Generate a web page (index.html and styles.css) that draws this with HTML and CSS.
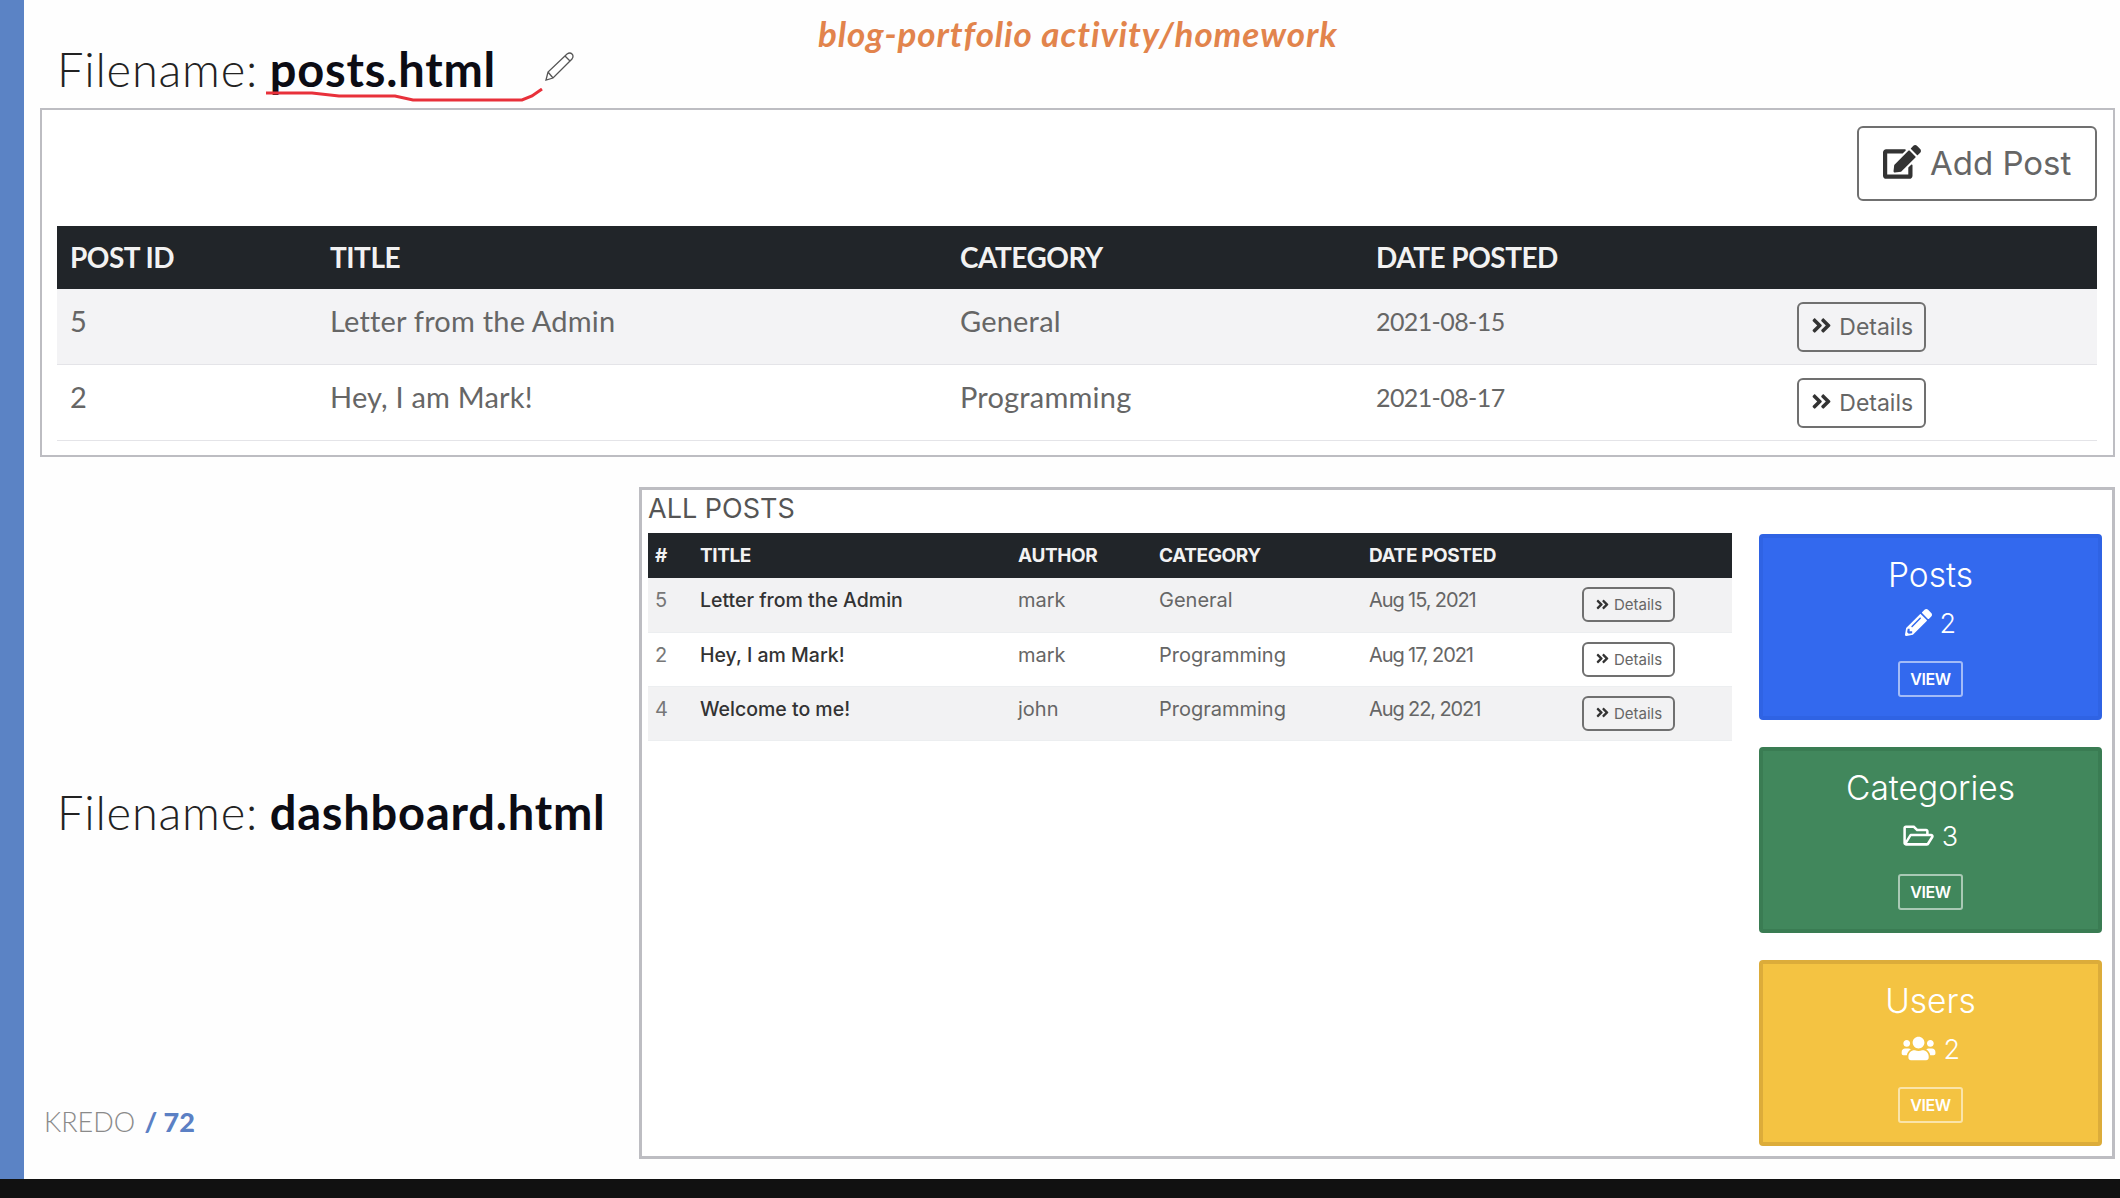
FILE: index.html
```html
<!DOCTYPE html>
<html lang="en">
<head>
  <meta charset="UTF-8">
  <meta name="viewport" content="width=device-width, initial-scale=1.0">
  <title>blog-portfolio activity/homework</title>
  <link rel="stylesheet" href="styles.css">
</head>
<body>
  <svg class="icon-defs" aria-hidden="true">
    <symbol id="i-edit" viewBox="0 0 576 512"><path d="M402.6 83.2l90.2 90.2c3.8 3.8 3.8 10 0 13.8L274.4 405.6l-92.8 10.3c-12.4 1.4-22.9-9.1-21.5-21.5l10.3-92.8L388.8 83.2c3.8-3.8 10-3.8 13.8 0zm162-22.9l-48.8-48.8c-15.2-15.2-39.9-15.2-55.2 0l-35.4 35.4c-3.8 3.8-3.8 10 0 13.8l90.2 90.2c3.8 3.8 10 3.8 13.8 0l35.4-35.4c15.2-15.3 15.2-40 0-55.2zM384 346.2V448H64V128h229.8c3.2 0 6.2-1.3 8.5-3.5l40-40c7.6-7.6 2.2-20.5-8.5-20.5H48C21.5 64 0 85.5 0 112v352c0 26.5 21.5 48 48 48h352c26.5 0 48-21.5 48-48V306.2c0-10.7-12.9-16-20.5-8.5l-40 40c-2.2 2.3-3.5 5.3-3.5 8.5z"/></symbol>
    <symbol id="i-chevrons" viewBox="0 0 448 512"><path d="M224.3 273l-136 136c-9.4 9.4-24.6 9.4-33.9 0l-22.6-22.6c-9.4-9.4-9.4-24.6 0-33.9l96.4-96.4-96.4-96.4c-9.4-9.4-9.4-24.6 0-33.9L54.3 103c9.4-9.4 24.6-9.4 33.9 0l136 136c9.5 9.4 9.5 24.6.1 34zm192-34l-136-136c-9.4-9.4-24.6-9.4-33.9 0l-22.6 22.6c-9.4 9.4-9.4 24.6 0 33.9l96.4 96.4-96.4 96.4c-9.4 9.4-9.4 24.6 0 33.9l22.6 22.6c9.4 9.4 24.6 9.4 33.9 0l136-136c9.4-9.2 9.4-24.4 0-33.8z"/></symbol>
    <symbol id="i-pencil" viewBox="0 0 512 512"><path d="M497.9 142.1l-46.1 46.1c-4.7 4.7-12.3 4.7-17 0l-111-111c-4.7-4.7-4.7-12.3 0-17l46.1-46.1c18.7-18.7 49.1-18.7 67.9 0l60.1 60.1c18.8 18.7 18.8 49.1 0 67.9zM284.2 99.8L21.6 362.4.4 483.9c-2.9 16.4 11.4 30.6 27.8 27.8l121.5-21.3 262.6-262.6c4.7-4.7 4.7-12.3 0-17l-111-111c-4.8-4.7-12.4-4.7-17.1 0zM124.1 339.9c-5.5-5.5-5.5-14.3 0-19.8l154-154c5.5-5.5 14.3-5.5 19.8 0s5.5 14.3 0 19.8l-154 154c-5.5 5.5-14.3 5.5-19.8 0zM88 424h48v36.3l-64.5 11.3-31.1-31.1L51.7 376H88v48z"/></symbol>
    <symbol id="i-folder" viewBox="0 0 576 512"><path d="M527.9 224H480v-48c0-26.5-21.5-48-48-48H272l-64-64H48C21.5 64 0 85.5 0 112v288c0 26.5 21.5 48 48 48h400c16.5 0 31.9-8.5 40.7-22.6l79.9-128c20-31.9-3-73.4-40.7-73.4zM48 118c0-3.3 2.7-6 6-6h134.1l64 64H426c3.3 0 6 2.7 6 6v42H152c-16.8 0-32.4 8.8-41.1 23.2L48 351.4zm400 282H72l77.2-128H528z"/></symbol>
    <symbol id="i-users" viewBox="0 0 640 512"><path d="M96 224c35.3 0 64-28.7 64-64s-28.7-64-64-64-64 28.7-64 64 28.7 64 64 64zm448 0c35.3 0 64-28.7 64-64s-28.7-64-64-64-64 28.7-64 64 28.7 64 64 64zm32 32h-64c-17.6 0-33.5 7.1-45.1 18.6 40.3 22.1 68.9 62 75.1 109.4h66c17.7 0 32-14.3 32-32v-32c0-35.3-28.7-64-64-64zm-256 0c61.9 0 112-50.1 112-112S381.9 32 320 32 208 82.1 208 144s50.1 112 112 112zm76.8 32h-8.3c-20.8 10-43.9 16-68.5 16s-47.6-6-68.5-16h-8.3C179.6 288 128 339.6 128 403.2V432c0 26.5 21.5 48 48 48h288c26.5 0 48-21.5 48-48v-28.8c0-63.6-51.6-115.2-115.2-115.2zm-223.7-13.4C161.5 263.1 145.6 256 128 256H64c-35.3 0-64 28.7-64 64v32c0 17.7 14.3 32 32 32h65.9c6.3-47.4 34.9-87.3 75.2-109.4z"/></symbol>
  </svg>

  <div class="slide">
    <div class="rail"></div>
    <div class="content">
      <header class="slide-head">
        <h1 class="filename">Filename: <b>posts.html</b></h1>
        <p class="activity">blog-portfolio activity/homework</p>
        <!-- pen annotation drawn over the slide -->
        <svg class="scribble" viewBox="0 0 280 14" aria-hidden="true">
          <path d="M0 5 L46 5 L73 8 L129 8 L147 12 L256 12 L266 8 L276 1"/>
        </svg>
        <svg class="pen-cursor" viewBox="0 0 29 29" aria-hidden="true">
          <path d="M1 28 L3 20 L22 2 Q25 0 27 2 Q29 4 27 7 L8 26 Z M3 20 L8 26 M20 4 L25 9"/>
        </svg>
      </header>

      <section class="panel panel-posts">
        <div class="toolbar">
          <button class="btn btn-add"><svg class="icon"><use href="#i-edit"/></svg> Add Post</button>
        </div>
        <table class="posts-table">
          <colgroup>
            <col class="pc-id"><col class="pc-title"><col class="pc-cat"><col class="pc-date"><col class="pc-act">
          </colgroup>
          <thead>
            <tr><th>POST ID</th><th>TITLE</th><th>CATEGORY</th><th>DATE POSTED</th><th></th></tr>
          </thead>
          <tbody>
            <tr>
              <td>5</td><td>Letter from the Admin</td><td>General</td><td>2021-08-15</td>
              <td><button class="btn btn-details"><svg class="icon"><use href="#i-chevrons"/></svg> Details</button></td>
            </tr>
            <tr>
              <td>2</td><td>Hey, I am Mark!</td><td>Programming</td><td>2021-08-17</td>
              <td><button class="btn btn-details"><svg class="icon"><use href="#i-chevrons"/></svg> Details</button></td>
            </tr>
          </tbody>
        </table>
      </section>

      <div class="lower">
        <div class="lower-left">
          <h1 class="filename filename-dash">Filename: <b>dashboard.html</b></h1>
          <p class="page-no">KREDO <span>/ 72</span></p>
        </div>

        <section class="panel panel-dash">
          <div class="dash-main">
            <h2>ALL POSTS</h2>
            <table class="dash-table">
              <colgroup>
                <col class="dc-id"><col class="dc-title"><col class="dc-author"><col class="dc-cat"><col class="dc-date"><col class="dc-act">
              </colgroup>
              <thead>
                <tr><th>#</th><th>TITLE</th><th>AUTHOR</th><th>CATEGORY</th><th>DATE POSTED</th><th></th></tr>
              </thead>
              <tbody>
                <tr>
                  <td>5</td><td class="post-title">Letter from the Admin</td><td>mark</td><td>General</td><td>Aug 15, 2021</td>
                  <td><button class="btn btn-small"><svg class="icon"><use href="#i-chevrons"/></svg> Details</button></td>
                </tr>
                <tr>
                  <td>2</td><td class="post-title">Hey, I am Mark!</td><td>mark</td><td>Programming</td><td>Aug 17, 2021</td>
                  <td><button class="btn btn-small"><svg class="icon"><use href="#i-chevrons"/></svg> Details</button></td>
                </tr>
                <tr>
                  <td>4</td><td class="post-title">Welcome to me!</td><td>john</td><td>Programming</td><td>Aug 22, 2021</td>
                  <td><button class="btn btn-small"><svg class="icon"><use href="#i-chevrons"/></svg> Details</button></td>
                </tr>
              </tbody>
            </table>
          </div>

          <aside class="cards">
            <div class="card card-blue">
              <h3>Posts</h3>
              <p class="count"><svg class="icon"><use href="#i-pencil"/></svg> 2</p>
              <a class="view-btn">VIEW</a>
            </div>
            <div class="card card-green">
              <h3>Categories</h3>
              <p class="count"><svg class="icon icon-wide"><use href="#i-folder"/></svg> 3</p>
              <a class="view-btn">VIEW</a>
            </div>
            <div class="card card-yellow">
              <h3>Users</h3>
              <p class="count"><svg class="icon icon-wider"><use href="#i-users"/></svg> 2</p>
              <a class="view-btn">VIEW</a>
            </div>
          </aside>
        </section>
      </div>
    </div>
  </div>
  <div class="video-bar"></div>
</body>
</html>
```

FILE: styles.css
```css
html, body {
  margin: 0;
  padding: 0;
}

body {
  width: 2120px;
  height: 1198px;
  overflow: hidden;
  background-color: #111;
  font-family: Inter, "Liberation Sans", sans-serif;
  color: #555;
}

.icon-defs {
  display: none;
}

.icon {
  width: 1em;
  height: 1em;
  fill: currentColor;
  vertical-align: -0.12em;
}

.icon-wide {
  width: 1.15em;
}

.icon-wider {
  width: 1.3em;
}

.slide {
  display: flex;
  height: 1179px;
  background-color: #fefefe;
}

.rail {
  width: 24px;
  flex-shrink: 0;
  background-color: #5b83c5;
}

.content {
  flex: 1;
  display: flex;
  flex-direction: column;
  padding: 0 5px 20px 16px;
  min-width: 0;
}

/* top of the slide */
.slide-head {
  position: relative;
  height: 108px;
  display: grid;
  grid-template-columns: 761px auto;
  padding-left: 17px;
}

.filename {
  margin: 39px 0 0;
  font-family: Lato, sans-serif;
  font-size: 47px;
  font-weight: 300;
  line-height: 60px;
  letter-spacing: 0.8px;
  word-spacing: -2px;
  color: #222;
}

.filename b {
  font-weight: 700;
  color: #0c0c14;
}

.activity {
  margin: 13px 0 0;
  font-family: Lato, sans-serif;
  font-size: 35px;
  font-weight: 700;
  font-style: italic;
  line-height: 40px;
  letter-spacing: 0.9px;
  color: #e2844c;
}

.scribble {
  position: absolute;
  left: 226px;
  top: 88px;
  width: 280px;
  height: 14px;
  fill: none;
  stroke: #e8303a;
  stroke-width: 3;
}

.pen-cursor {
  position: absolute;
  left: 505px;
  top: 52px;
  width: 29px;
  height: 29px;
  fill: #fff;
  stroke: #555;
  stroke-width: 1.3;
}

/* panels */
.panel {
  background-color: #fff;
  border: 2px solid #bdbdc2;
  box-sizing: border-box;
}

.panel-posts {
  height: 349px;
  padding: 16px 16px 0 15px;
}

.toolbar {
  display: flex;
  justify-content: flex-end;
  margin-bottom: 25px;
}

.btn {
  background: transparent;
  border: 2px solid #707070;
  border-radius: 6px;
  font-family: Inter, sans-serif;
  color: #666;
  padding: 0;
  white-space: nowrap;
}

.btn .icon {
  color: #333;
}

.btn-add {
  width: 240px;
  height: 75px;
  padding-bottom: 2px;
  font-size: 33px;
}

.btn-add .icon {
  width: 1.15em;
  height: 1.15em;
  vertical-align: -0.18em;
}

.btn-details {
  width: 129px;
  height: 50px;
  font-size: 23px;
}

.btn-small {
  width: 93px;
  height: 35px;
  font-size: 15px;
}

table {
  width: 100%;
  border-collapse: collapse;
  table-layout: fixed;
}

th {
  background-color: #212529;
  color: #f2f2f2;
  text-align: left;
  font-weight: 700;
}

/* posts.html table */
.pc-id { width: 260px; }
.pc-title { width: 630px; }
.pc-cat { width: 416px; }
.pc-date { width: 428px; }

.posts-table th {
  height: 63px;
  padding: 0 0 2px 13px;
  box-sizing: border-box;
  font-family: Lato, sans-serif;
  font-size: 28px;
  letter-spacing: -0.5px;
}

.posts-table td {
  height: 75px;
  padding: 0 0 0 13px;
  font-family: Lato, sans-serif;
  font-size: 29px;
  letter-spacing: 0.2px;
  color: #666;
  border-bottom: 1px solid #e4e4e8;
}

.posts-table td:first-child,
.posts-table td:nth-child(2),
.posts-table td:nth-child(3),
.posts-table td:nth-child(4) {
  padding-bottom: 12px;
  box-sizing: border-box;
}

.posts-table td:nth-child(4) {
  font-size: 25px;
  letter-spacing: -0.6px;
}

.posts-table td:last-child {
  padding-left: 6px;
}

.posts-table tbody tr:nth-child(odd) {
  background-color: #f3f3f5;
}

/* dashboard.html */
.lower {
  flex: 1;
  display: flex;
  margin-top: 30px;
  min-height: 0;
}

.lower-left {
  width: 599px;
  flex-shrink: 0;
  display: flex;
  flex-direction: column;
}

.filename-dash {
  margin: 295px 0 0 17px;
}

.page-no {
  margin: auto 0 22px 4px;
  font-family: Lato, sans-serif;
  font-size: 27px;
  font-weight: 300;
  line-height: 30px;
  color: #8a8a8a;
}

.page-no span {
  font-weight: 900;
  color: #5b80c4;
  margin-left: 2px;
}

.panel-dash {
  flex: 1;
  display: flex;
  gap: 27px;
  border-width: 3px;
  padding: 0 10px 0 6px;
}

.dash-main {
  flex: 1;
  min-width: 0;
}

.dash-main h2 {
  margin: 0;
  height: 43px;
  font-size: 27px;
  font-weight: 400;
  line-height: 37px;
  color: #555;
}

.dc-id { width: 45px; }
.dc-title { width: 318px; }
.dc-author { width: 141px; }
.dc-cat { width: 210px; }
.dc-date { width: 215px; }

.dash-table th {
  height: 45px;
  padding: 0 0 0 7px;
  font-size: 19px;
  letter-spacing: -0.4px;
}

.dash-table td {
  height: 54px;
  box-sizing: border-box;
  padding: 10px 0 0 7px;
  vertical-align: top;
  font-size: 20px;
  color: #666;
  border-bottom: 1px solid #eceef0;
}

.dash-table td:first-child {
  color: #777;
}

.dash-table td:nth-child(5) {
  letter-spacing: -1.1px;
}

.dash-table .post-title {
  color: #333;
  font-weight: 500;
  font-size: 19.5px;
}

.dash-table td:last-child {
  padding: 9px 0 0 5px;
}

.dash-table tbody tr:nth-child(odd) {
  background-color: #f2f2f3;
}

/* side cards */
.cards {
  width: 343px;
  flex-shrink: 0;
  display: flex;
  flex-direction: column;
  gap: 27px;
  margin-top: 44px;
}

.card {
  box-sizing: border-box;
  height: 186px;
  border-radius: 4px;
  border: 4px solid transparent;
  display: flex;
  flex-direction: column;
  align-items: center;
  color: #fff;
}

.card h3 {
  margin: 17px 0 0;
  font-size: 33.5px;
  font-weight: 300;
  line-height: 40px;
}

.count {
  margin: 12px 0 0;
  font-size: 27px;
  font-weight: 300;
  line-height: 34px;
}

.view-btn {
  margin-top: 20px;
  box-sizing: border-box;
  width: 65px;
  height: 36px;
  border: 2px solid rgba(255, 255, 255, 0.55);
  border-radius: 3px;
  font-size: 16px;
  font-weight: 600;
  line-height: 32px;
  text-align: center;
  letter-spacing: -0.4px;
}

.card-blue {
  background-color: #3369ee;
  border-color: #2f63e4;
}

.card-green {
  background-color: #41875c;
  border-color: #3a7c53;
}

.card-yellow {
  background-color: #f4c342;
  border-color: #dcac3a;
}

.video-bar {
  height: 19px;
  background-color: #111;
}
```
